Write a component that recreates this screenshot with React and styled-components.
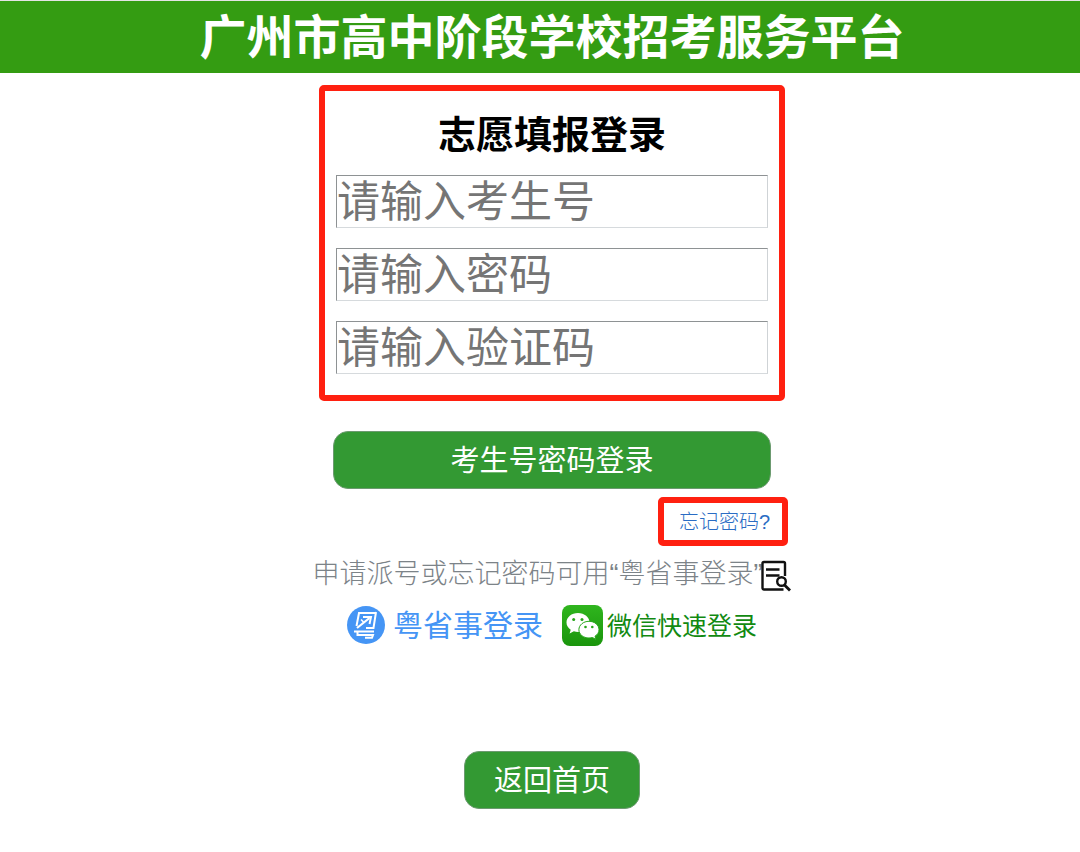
import React from 'react';
import styled, { createGlobalStyle } from 'styled-components';

const GlobalStyle = createGlobalStyle`
  *, *::before, *::after { box-sizing: border-box; }
  body {
    margin: 0;
    background: #fff;
    color: #000;
    font-family: "Liberation Sans", "Noto Sans CJK SC", sans-serif;
  }
`;

const Page = styled.div`
  background: #fff;
  border-top: 1px solid #e4e4e4;
`;

const Header = styled.header`
  display: flex;
  justify-content: center;
  align-items: center;
  min-height: 72px;
  padding: 2px 0 0 24px;
  background: #349c12;
`;

const SiteTitle = styled.h1`
  margin: 0;
  color: #fff;
  font-size: 47px;
  line-height: 70px;
  font-weight: 700;
  white-space: nowrap;
`;

const Main = styled.main`
  display: flex;
  flex-direction: column;
  align-items: center;
  padding: 12px 0 44px 24px;
`;

const LoginForm = styled.form`
  display: flex;
  flex-direction: column;
  align-items: center;
  width: 100%;
  max-width: 472px;
`;

const Fields = styled.fieldset`
  display: flex;
  flex-direction: column;
  gap: 20px;
  width: calc(100% - 6px);
  min-width: 0;
  margin: 0;
  padding: 16px 11px 21px;
  border: 6px solid #ff2010;
  border-radius: 5px;
`;

const FormTitle = styled.h2`
  margin: 0 0 -8px;
  font-size: 38px;
  line-height: 56px;
  font-weight: 700;
  text-align: center;
`;

const Field = styled.input`
  width: 100%;
  height: 53px;
  padding: 2px 0 0;
  border: 1px solid;
  border-color: #8e9294 #cfd3d6 #d6dadd #8e9294;
  border-radius: 0;
  background: #fff;
  font: 43px/49px "Liberation Sans", "Noto Sans CJK SC", sans-serif;
  outline: none;

  &::placeholder {
    color: #757575;
    opacity: 1;
  }
`;

const Button = styled.button`
  width: ${({ $wide }) => ($wide ? 'calc(100% - 34px)' : '176px')};
  height: 58px;
  margin-top: ${({ $wide }) => ($wide ? '30px' : '0')};
  padding: 2px 0 0;
  border: 1px solid #6c9a70;
  border-radius: 15px;
  background: #339933;
  color: #fff;
  font: 29px/54px "Liberation Sans", "Noto Sans CJK SC", sans-serif;
  cursor: pointer;
`;

const ForgotLink = styled.a`
  align-self: flex-end;
  width: 130px;
  height: 49px;
  margin-top: 8px;
  padding: 0 0 0 15px;
  border: 6px solid #ff2010;
  border-radius: 5px;
  color: #2a6cc4;
  font: 300 20px/38px "Liberation Sans", "Noto Sans CJK SC", sans-serif;
  text-decoration: none;
  white-space: nowrap;
`;

const Hint = styled.p`
  display: flex;
  align-items: center;
  margin: 8px 0 0;
  color: #7c8388;
  font: 300 27px/40px "Liberation Sans", "Noto Sans CJK SC", sans-serif;
  white-space: nowrap;
`;

const HelpLink = styled.a`
  display: flex;
  margin-left: -1px;
  padding-top: 4px;
  color: #111;
`;

const QuickLogins = styled.nav`
  display: flex;
  align-items: center;
  gap: 19px;
  margin-top: 10px;
`;

const QuickLogin = styled.a`
  display: flex;
  align-items: center;
  gap: ${({ $gap }) => $gap};
  color: ${({ $color }) => $color};
  font-size: ${({ $size }) => $size};
  line-height: 42px;
  text-decoration: none;
  white-space: nowrap;
`;

const LinkText = styled.span`
  padding-top: 2px;
  line-height: 40px;
`;

const Footer = styled.footer`
  margin-top: 105px;
`;

const RecordSearchIcon = () => (
  <svg width="30" height="32" viewBox="0 0 30 32" fill="none" stroke="currentColor" strokeWidth="2.4" aria-hidden="true">
    <path d="M24 16V3.500a1.500 1.500 0 0 0-1.500-1.500H3a1.500 1.500 0 0 0-1.500 1.500v24.500a1.500 1.500 0 0 0 1.500 1.500H22.500" />
    <path d="M5 9.500h13.500M5 15.500h13.500" />
    <circle cx="20.500" cy="21.500" r="4.300" />
    <path d="m23.500 25 5.500 5.500" strokeWidth="2.800" />
  </svg>
);

const YueIcon = () => (
  <svg width="38" height="38" viewBox="0 0 38 38" fill="none" aria-hidden="true">
    <circle cx="19" cy="19" r="19" fill="#4595f5" />
    <g stroke="#fff" strokeWidth="2">
      <path d="M29 7H12L9.500 20" />
      <path d="M29 6 26.500 22H19" />
      <path d="M10 22 22.500 12" strokeWidth="2.200" />
      <path d="M16 11h8l-1.500 7" strokeWidth="2" />
      <path d="M14 13.500l2.500 2.500" strokeWidth="1.600" />
      <path d="M7 25.500h20M10.500 25.500v3.500H26l-1 2.800h-7" />
    </g>
  </svg>
);

const WeChatIcon = () => (
  <svg width="41" height="41" viewBox="0 0 41 41" aria-hidden="true">
    <defs>
      <linearGradient id="wechat-green" x1="0" y1="0" x2="0" y2="1">
        <stop offset="0" stopColor="#2fb51e" />
        <stop offset="1" stopColor="#1a950c" />
      </linearGradient>
    </defs>
    <rect width="41" height="41" rx="8" fill="url(#wechat-green)" />
    <path d="M16 8C9.500 8 4.500 12.200 4.500 17.500c0 3 1.600 5.500 4.200 7.300L7.600 28.500l4.300-2.200c1.300.4 2.700.6 4.100.6 6.500 0 11.500-4.200 11.500-9.400S22.500 8 16 8Z" fill="#fff" />
    <path d="M27 16.300c-5.600 0-10.100 3.700-10.100 8.400S21.400 33 27 33c1.200 0 2.400-.2 3.500-.5l3.400 1.900-.9-3.200c2.500-1.500 4-3.800 4-6.500 0-4.700-4.400-8.400-10-8.400Z" fill="#fff" stroke="#26a619" strokeWidth="1" />
    <g fill="#26a619">
      <circle cx="11.700" cy="14.500" r="1.500" />
      <circle cx="20" cy="14.500" r="1.500" />
      <circle cx="23.500" cy="22" r="1.300" />
      <circle cx="30.300" cy="22" r="1.300" />
    </g>
  </svg>
);

export default function App() {
  return (
    <>
      <GlobalStyle />
      <Page>
        <Header>
          <SiteTitle>广州市高中阶段学校招考服务平台</SiteTitle>
        </Header>
        <Main>
          <LoginForm onSubmit={(event) => event.preventDefault()}>
            <Fields>
              <FormTitle>志愿填报登录</FormTitle>
              <Field type="text" placeholder="请输入考生号" aria-label="请输入考生号" />
              <Field type="password" placeholder="请输入密码" aria-label="请输入密码" />
              <Field type="text" placeholder="请输入验证码" aria-label="请输入验证码" />
            </Fields>
            <Button type="submit" $wide>考生号密码登录</Button>
            <ForgotLink href="#forgot">忘记密码?</ForgotLink>
          </LoginForm>
          <Hint>
            申请派号或忘记密码可用“粤省事登录”
            <HelpLink href="#records" aria-label="粤省事登录"><RecordSearchIcon /></HelpLink>
          </Hint>
          <QuickLogins>
            <QuickLogin href="#yueshengshi" $color="#4595f5" $size="30px" $gap="8px">
              <YueIcon />
              <LinkText>粤省事登录</LinkText>
            </QuickLogin>
            <QuickLogin href="#wechat" $color="#128a12" $size="25px" $gap="4px">
              <WeChatIcon />
              <LinkText>微信快速登录</LinkText>
            </QuickLogin>
          </QuickLogins>
          <Footer>
            <Button type="button">返回首页</Button>
          </Footer>
        </Main>
      </Page>
    </>
  );
}
